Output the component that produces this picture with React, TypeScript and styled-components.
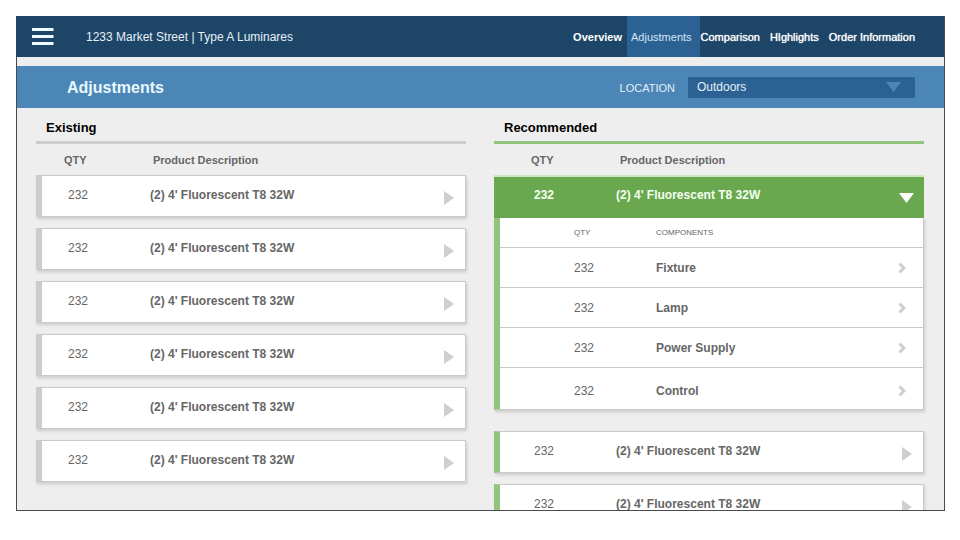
import React, { useState } from 'react';
import styled, { createGlobalStyle, css } from 'styled-components';

type Tone = 'neutral' | 'green';

const bar = { neutral: '#cccccc', green: '#93c47d' };

const GlobalStyle = createGlobalStyle`
  *, *::before, *::after { box-sizing: border-box; }
  body {
    margin: 0;
    background: #ffffff;
    color: #666666;
    font: 12px/16px "Liberation Sans", Arial, sans-serif;
  }
  button, select { font: inherit; }
`;

const Page = styled.div`
  display: flex;
  flex-direction: column;
  height: 100vh;
  padding: 16px 15px 29px 16px;
`;

const Header = styled.header`
  display: flex;
  align-items: center;
  flex: none;
  height: 41px;
  padding: 0 24px 0 16px;
  border-right: 1px solid #4a4a4a;
  background: #1c4567;
  color: #ffffff;
`;

const MenuButton = styled.button`
  display: flex;
  padding: 0;
  border: 0;
  background: none;
  color: inherit;
  cursor: pointer;
`;

const ProjectName = styled.div`
  margin-left: 32px;
  color: #e6f1f8;
  white-space: nowrap;
`;

const Nav = styled.nav`
  display: flex;
  align-self: stretch;
  margin-left: auto;
  font-size: 11px;
`;

const NavLink = styled.a<{ $look?: 'bold' | 'active' }>`
  display: flex;
  align-items: center;
  padding: 0 5px;
  color: #ffffff;
  text-decoration: none;
  white-space: nowrap;
  text-shadow: 0 0 1px #ffffff;
  ${({ $look }) => $look === 'bold' && css`
    font-weight: bold;
    text-shadow: none;
  `}
  ${({ $look }) => $look === 'active' && css`
    padding: 0 8px 0 4px;
    margin-right: -4px;
    background: #2c6193;
    color: #d3e6f4;
    text-shadow: none;
  `}
`;

const Body = styled.main`
  display: flex;
  flex-direction: column;
  flex: 1;
  min-height: 0;
  padding-top: 9px;
  border: 1px solid #4a4a4a;
  border-top: 0;
  background: #eeeeee;
`;

const TitleBar = styled.div`
  display: flex;
  align-items: center;
  flex: none;
  height: 42px;
  padding: 0 29px 0 50px;
  background: #4c86b6;
`;

const Title = styled.h1`
  margin: 0 auto 0 0;
  padding-top: 2px;
  color: #e8f8ff;
  font-size: 16px;
  line-height: 20px;
`;

const LocationLabel = styled.label`
  margin-right: 13px;
  padding-top: 2px;
  color: #e3f0f8;
  font-size: 11px;
`;

const SelectBox = styled.div`
  display: grid;
  align-items: center;
  width: 227px;
  > * { grid-area: 1 / 1; }
  svg {
    justify-self: end;
    margin-right: 14px;
    pointer-events: none;
  }
`;

const Select = styled.select`
  width: 100%;
  height: 21px;
  padding: 0 32px 0 9px;
  border: 0;
  border-radius: 0;
  appearance: none;
  background: #2c6193;
  color: #e3f0f8;
`;

const Columns = styled.div`
  display: grid;
  grid-template-columns: 1fr 1fr;
  gap: 28px;
  flex: 1;
  min-height: 0;
  padding: 10px 20px 0 19px;
  overflow: hidden;
`;

const ColumnTitle = styled.h2<{ $tone: Tone }>`
  margin: 0;
  height: 26px;
  padding: 0 10px 8px;
  border-bottom: 3px solid ${({ $tone }) => bar[$tone]};
  color: #000000;
  font-size: 13px;
  line-height: 20px;
`;

const Table = styled.table`
  display: block;
  thead, tbody { display: block; }
  th, td { padding: 0; text-align: left; }
`;

const HeadRow = styled.tr<{ $tone: Tone }>`
  display: flex;
  align-items: center;
  height: 31px;
  padding-left: ${({ $tone }) => ($tone === 'green' ? 37 : 28)}px;
  font-size: 11px;
`;

const QtyHead = styled.th`
  width: 89px;
`;

const Card = styled.tr<{ $tone: Tone }>`
  display: flex;
  align-items: center;
  height: 42px;
  margin-bottom: 11px;
  padding: 0 11px 2px ${({ $tone }) => ($tone === 'green' ? 34 : 26)}px;
  border: 1px solid #c9c9c9;
  border-left: 6px solid ${({ $tone }) => bar[$tone]};
  background: #ffffff;
  box-shadow: 1px 2px 3px rgba(0, 0, 0, 0.15);
`;

const OpenRow = styled.tr`
  display: flex;
  align-items: center;
  height: 43px;
  padding: 0 10px 5px 40px;
  border-top: 2px solid #cfe3c5;
  background: #6aa84f;
  color: #f4fff0;
  font-weight: bold;
`;

const Qty = styled.td`
  width: 82px;
`;

const Name = styled.td`
  flex: 1;
  font-weight: bold;
`;

const IconCell = styled.td`
  && { padding-top: 6px; }
`;

const IconButton = styled.button`
  display: flex;
  padding: 0;
  border: 0;
  background: none;
  cursor: pointer;
`;

const DetailRow = styled.tr`
  display: block;
  margin-bottom: 21px;
  border: 1px solid #c9c9c9;
  border-top: 0;
  border-left: 6px solid #93c47d;
  background: #ffffff;
  box-shadow: 1px 2px 3px rgba(0, 0, 0, 0.15);
  > td { display: block; }
`;

const PartHeadRow = styled.tr`
  display: flex;
  align-items: center;
  height: 29px;
  padding-left: 74px;
  font-size: 8px;
  th { font-weight: normal; }
`;

const PartRow = styled.tr`
  display: flex;
  align-items: center;
  height: 40px;
  padding: 0 17px 0 74px;
  border-top: 1px solid #c9c9c9;
  &:last-child {
    height: 42px;
    padding-top: 4px;
  }
`;

const RightArrow = () => (
  <svg width="10" height="14" viewBox="0 0 10 14" aria-hidden="true">
    <path d="M0 0 10 7 0 14Z" fill="#cfcfcf" />
  </svg>
);

const DownArrow = ({ color }: { color: string }) => (
  <svg width="15" height="10" viewBox="0 0 15 10" aria-hidden="true">
    <path d="M0 0H15L7.5 10Z" fill={color} />
  </svg>
);

const Chevron = () => (
  <svg width="8" height="12" viewBox="0 0 8 12" aria-hidden="true">
    <path d="M1.5 1.5 6 6 1.5 10.5" fill="none" stroke="#cccccc" strokeWidth="2.8" />
  </svg>
);

const MenuIcon = () => (
  <svg width="22" height="17" viewBox="0 0 22 17" aria-hidden="true">
    <path d="M0 1.5H21.5M0 8.5H21.5M0 15.5H21.5" stroke="#f0fbff" strokeWidth="3" />
  </svg>
);

const product = "(2) 4' Fluorescent T8 32W";
const parts = ['Fixture', 'Lamp', 'Power Supply', 'Control'];

const TableHead = ({ tone }: { tone: Tone }) => (
  <thead>
    <HeadRow $tone={tone}>
      <QtyHead scope="col">QTY</QtyHead>
      <th scope="col">Product Description</th>
    </HeadRow>
  </thead>
);

const ProductCard = ({ tone, onOpen }: { tone: Tone; onOpen?: () => void }) => (
  <Card $tone={tone}>
    <Qty>232</Qty>
    <Name>{product}</Name>
    <IconCell>
      <IconButton aria-label={`Open ${product}`} onClick={onOpen}><RightArrow /></IconButton>
    </IconCell>
  </Card>
);

const OpenProduct = ({ onClose }: { onClose: () => void }) => (
  <>
    <OpenRow>
      <Qty>232</Qty>
      <Name>{product}</Name>
      <IconCell>
        <IconButton aria-label={`Close ${product}`} onClick={onClose}><DownArrow color="#ffffff" /></IconButton>
      </IconCell>
    </OpenRow>
    <DetailRow>
      <td>
        <Table>
          <thead>
            <PartHeadRow>
              <Qty as="th" scope="col">QTY</Qty>
              <th scope="col">COMPONENTS</th>
            </PartHeadRow>
          </thead>
          <tbody>
            {parts.map((part) => (
              <PartRow key={part}>
                <Qty>232</Qty>
                <Name>{part}</Name>
                <td><IconButton aria-label={`Edit ${part}`}><Chevron /></IconButton></td>
              </PartRow>
            ))}
          </tbody>
        </Table>
      </td>
    </DetailRow>
  </>
);

export default function App() {
  const [openIndex, setOpenIndex] = useState<number | null>(0);
  return (
    <>
      <GlobalStyle />
      <Page>
        <Header>
          <MenuButton aria-label="Menu"><MenuIcon /></MenuButton>
          <ProjectName>1233 Market Street | Type A Luminares</ProjectName>
          <Nav>
            <NavLink href="#overview" $look="bold">Overview</NavLink>
            <NavLink href="#adjustments" $look="active" aria-current="page">Adjustments</NavLink>
            <NavLink href="#comparison">Comparison</NavLink>
            <NavLink href="#highlights">HIghlights</NavLink>
            <NavLink href="#order">Order Information</NavLink>
          </Nav>
        </Header>
        <Body>
          <TitleBar>
            <Title>Adjustments</Title>
            <LocationLabel htmlFor="location">LOCATION</LocationLabel>
            <SelectBox>
              <Select id="location" defaultValue="Outdoors">
                <option>Outdoors</option>
              </Select>
              <DownArrow color="#4c86b6" />
            </SelectBox>
          </TitleBar>
          <Columns>
            <section>
              <ColumnTitle $tone="neutral">Existing</ColumnTitle>
              <Table>
                <TableHead tone="neutral" />
                <tbody>
                  {[0, 1, 2, 3, 4, 5].map((i) => <ProductCard key={i} tone="neutral" />)}
                </tbody>
              </Table>
            </section>
            <section>
              <ColumnTitle $tone="green">Recommended</ColumnTitle>
              <Table>
                <TableHead tone="green" />
                <tbody>
                  {[0, 1, 2].map((i) =>
                    i === openIndex
                      ? <OpenProduct key={i} onClose={() => setOpenIndex(null)} />
                      : <ProductCard key={i} tone="green" onOpen={() => setOpenIndex(i)} />
                  )}
                </tbody>
              </Table>
            </section>
          </Columns>
        </Body>
      </Page>
    </>
  );
}
